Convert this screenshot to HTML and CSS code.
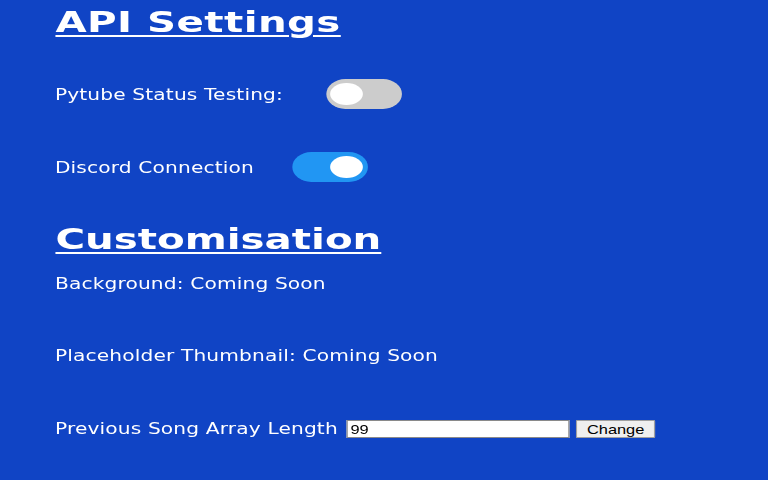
FILE: index.html
```html
<!DOCTYPE html>
<html lang="en">
<head>
<meta charset="utf-8">
<title>Settings</title>
<link rel="stylesheet" href="styles.css">
</head>
<body>
<main class="page">
  <h1 class="title title-api">API Settings</h1>
  <div class="row row-pytube">
    <span class="label">Pytube Status Testing:</span>
    <label class="switch"><input type="checkbox"><span class="slider"></span></label>
  </div>
  <div class="row row-discord">
    <span class="label">Discord Connection</span>
    <label class="switch"><input type="checkbox" checked><span class="slider"></span></label>
  </div>
  <h1 class="title title-custom">Customisation</h1>
  <p class="line line-bg">Background: Coming Soon</p>
  <p class="line line-thumb">Placeholder Thumbnail: Coming Soon</p>
  <form class="row row-array" onsubmit="return false">
    <span class="label">Previous Song Array Length</span>
    <input class="num" type="text" value="99">
    <button class="btn" type="button">Change</button>
  </form>
</main>
</body>
</html>
```
FILE: styles.css
```css
html, body {
  margin: 0;
  height: 100%;
  background: #1044c5;
  overflow: hidden;
}
body {
  font-family: "DejaVu Sans", Verdana, sans-serif;
  font-size: 16px;
  color: #ffffff;
}
.page {
  width: 610px;
  padding-left: 43.6px;
  box-sizing: border-box;
  transform: scaleX(1.26);
  transform-origin: 0 0;
  display: flex;
  flex-direction: column;
  align-items: flex-start;
}
.title {
  margin: 0;
  font-size: 28px;
  font-weight: bold;
  line-height: 34px;
  text-decoration: underline;
  text-decoration-thickness: 2px;
  text-underline-offset: 3px;
  transform: scaleX(1.143);
  transform-origin: 0 0;
}
.title-api { margin-top: 6px; letter-spacing: 0.3px; }
.title-custom { margin-top: 41px; }
.row {
  display: flex;
  align-items: center;
  margin: 0;
}
.label, .line { line-height: 19px; white-space: nowrap; letter-spacing: 0.12px; }
.row-pytube { margin-top: 39px; gap: 34.7px; }
.row-discord { margin-top: 43px; gap: 30.4px; }
.line { margin: 0; }
.line-bg { margin-top: 17px; }
.line-thumb { margin-top: 53px; }
.row-array { margin-top: 55px; gap: 5px; height: 18px; }
.row-array .label { position: relative; top: -1px; margin-right: 2px; }

.switch {
  position: relative;
  display: inline-block;
  width: 60px;
  height: 30px;
}
.switch input { opacity: 0; width: 0; height: 0; margin: 0; }
.slider {
  position: absolute;
  inset: 0;
  background: #cccccc;
  border-radius: 15px;
}
.slider::before {
  content: "";
  position: absolute;
  left: 3px;
  top: 4px;
  width: 26px;
  height: 22px;
  border-radius: 50%;
  background: #ffffff;
}
.switch input:checked + .slider { background: #2196f3; }
.switch input:checked + .slider::before { left: auto; right: 4px; }

.num {
  width: 177px;
  height: 18px;
  box-sizing: border-box;
  margin: 0;
  padding: 0 2px;
  border: 1px solid #8a8a8a;
  background: #ffffff;
  font-family: "Liberation Sans", Arial, sans-serif;
  font-size: 13px;
  color: #000;
  border-radius: 0;
  outline: none;
}
.btn {
  width: 63px;
  height: 18px;
  box-sizing: border-box;
  margin: 0;
  padding: 0;
  border: 1px solid #a0a0a0;
  background: #efefef;
  font-family: "Liberation Sans", Arial, sans-serif;
  font-size: 13px;
  color: #000;
  border-radius: 1px;
}
```
